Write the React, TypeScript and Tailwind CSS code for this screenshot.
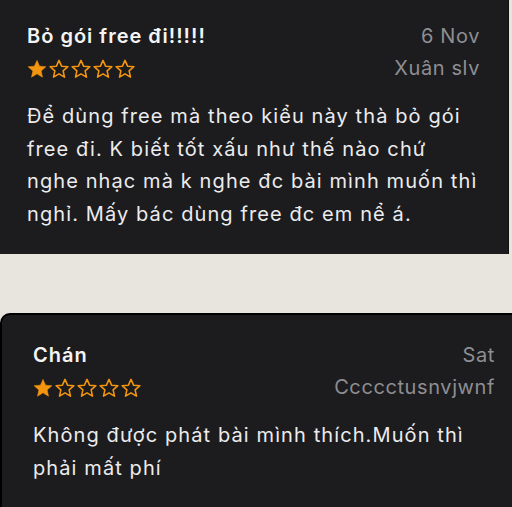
import React from "react";

function Star({ filled }: { filled: boolean }) {
  return (
    <svg width="22" height="22" viewBox="0 0 24 24" className="shrink-0">
      <path
        d="M12 2.6l2.8 6.3 6.9.6-5.2 4.6 1.5 6.8-6-3.6-6 3.6 1.5-6.8-5.2-4.6 6.9-.6z"
        fill={filled ? "#f4950f" : "none"}
        stroke="#f4950f"
        strokeWidth={filled ? 0.6 : 1.7}
        strokeLinejoin="round"
      />
    </svg>
  );
}

function Stars({ count }: { count: number }) {
  return (
    <div className="flex -ml-[1px]">
      {[0, 1, 2, 3, 4].map((i) => (
        <Star key={i} filled={i < count} />
      ))}
    </div>
  );
}

interface ReviewProps {
  title: string;
  date: string;
  author: string;
  body: string;
}

function ReviewBody({ title, date, author, body }: ReviewProps) {
  return (
    <>
      <div className="flex justify-between">
        <div className="flex flex-col">
          <div className="text-[20px] leading-[24px] font-semibold tracking-[1px] text-[#f4f4f5]">
            {title}
          </div>
          <div className="mt-[10px]">
            <Stars count={1} />
          </div>
        </div>
        <div className="flex flex-col items-end text-[20px] tracking-[0.6px] text-[#8e8e93]">
          <div className="leading-[24px]">{date}</div>
          <div className="leading-[24px] mt-[8px]">{author}</div>
        </div>
      </div>
      <p className="mt-[20px] text-[20px] leading-[32.5px] tracking-[1.1px] text-[#ececee]">{body}</p>
    </>
  );
}

export default function App() {
  return (
    <div
      className="w-[512px] h-[507px] bg-[#e8e5df] flex flex-col overflow-hidden"
      style={{ fontFamily: "Inter, 'Noto Sans', sans-serif" }}
    >
      <div className="h-[254px] w-[509px] shrink-0 bg-[#1c1c1e] border-r border-[#111] pl-[27px] pr-[28px] pt-[24px]">
        <ReviewBody
          title="Bỏ gói free đi!!!!!"
          date="6 Nov"
          author="Xuân slv"
          body="Để dùng free mà theo kiểu này thà bỏ gói free đi. K biết tốt xấu như thế nào chứ nghe nhạc mà k nghe đc bài mình muốn thì nghỉ. Mấy bác dùng free đc em nể á."
        />
      </div>
      <div className="mt-[59px] flex-1 bg-[#1c1c1e] border-t-2 border-l-2 border-black rounded-tl-[10px] pl-[31px] pr-[17px] pt-[28px]">
        <ReviewBody
          title="Chán"
          date="Sat"
          author="Ccccctusnvjwnf"
          body="Không được phát bài mình thích.Muốn thì phải mất phí"
        />
      </div>
    </div>
  );
}
